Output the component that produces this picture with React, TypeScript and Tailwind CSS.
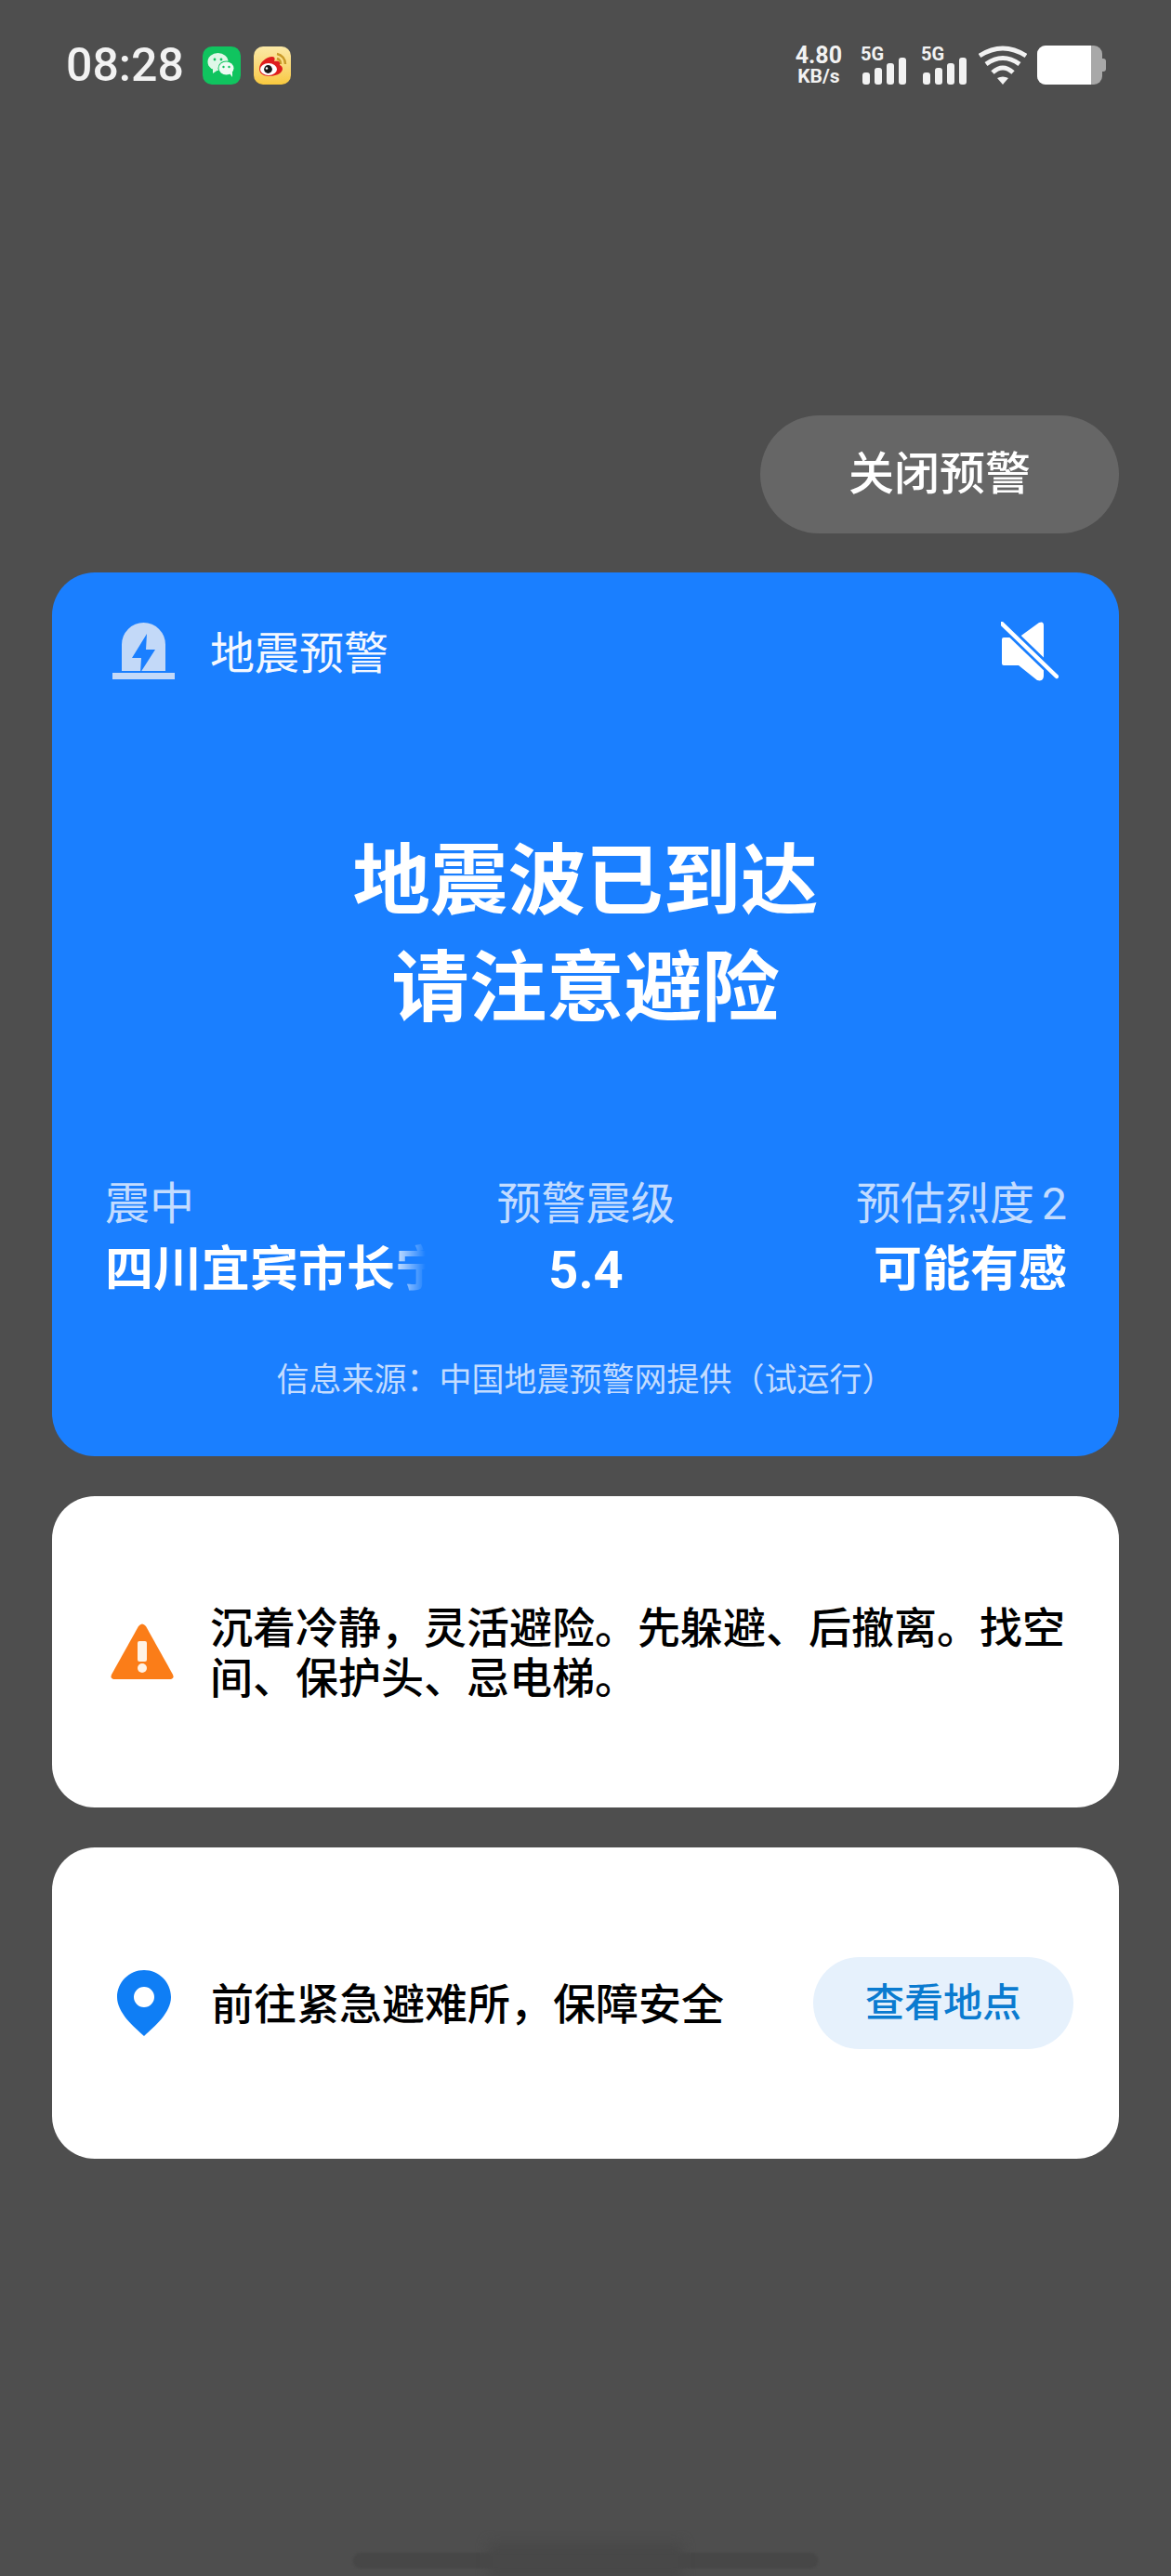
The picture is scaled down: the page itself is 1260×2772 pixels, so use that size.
import React from "react";

const cjk = `Roboto, "Noto Sans CJK SC", sans-serif`;

function WeChat() {
  return (
    <div className="w-[41px] h-[41px] rounded-[10px] bg-[#10c45f] flex items-center justify-center">
      <svg width="41" height="41" viewBox="0 0 41 41">
        <ellipse cx="16.5" cy="16.5" ry="9.5" rx="11" fill="#dff7e8" />
        <path d="M11 23 L11 29 L17 25 Z" fill="#dff7e8" />
        <ellipse cx="25.5" cy="23.5" rx="9" ry="8" fill="#10c45f" />
        <ellipse cx="25.5" cy="23.5" rx="8" ry="7" fill="#eefbf3" />
        <path d="M29 29 L32 33 L32 27 Z" fill="#eefbf3" />
        <circle cx="13" cy="14" r="1.4" fill="#10c45f" />
        <circle cx="20" cy="14" r="1.4" fill="#10c45f" />
        <circle cx="22.5" cy="22" r="1.2" fill="#10c45f" />
        <circle cx="28.5" cy="22" r="1.2" fill="#10c45f" />
      </svg>
    </div>
  );
}

function Weibo() {
  return (
    <div className="w-[40px] h-[41px] rounded-[10px] bg-gradient-to-b from-[#fbe9a6] to-[#f9c93c] flex items-center justify-center">
      <svg width="40" height="41" viewBox="0 0 40 41">
        <path d="M25 8 A11 11 0 0 1 34 19" stroke="#c99a2a" strokeWidth="2.4" fill="none" />
        <path d="M25 13 A6 6 0 0 1 29 19" stroke="#c99a2a" strokeWidth="2.4" fill="none" />
        <path d="M6 24 C6 17 14 11 20 11 C23 11 23 14 22 16 C26 15 29 16 28 20 C32 22 32 26 28 29 C22 33 6 34 6 24 Z" fill="#df1d1d" />
        <ellipse cx="16" cy="24.5" rx="9" ry="6.5" fill="#ffffff" />
        <circle cx="15.5" cy="24.5" r="4.4" fill="#1a1a1a" />
        <circle cx="14" cy="23.5" r="1.2" fill="#ffffff" />
      </svg>
    </div>
  );
}

function Signal() {
  return (
    <div className="relative w-[49px] h-[42px]">
      <span className="absolute left-0 -top-[1px] text-[#f2f2f2] text-[20px] leading-[20px] font-bold">5G</span>
      <svg width="49" height="42" viewBox="0 0 49 42" className="absolute left-0 top-0">
        <rect x="2" y="29" width="8" height="13" rx="3" fill="#f2f2f2" />
        <rect x="15" y="24" width="8" height="18" rx="3" fill="#f2f2f2" />
        <rect x="28" y="19" width="8" height="23" rx="3" fill="#f2f2f2" />
        <rect x="41" y="13" width="8" height="29" rx="3" fill="#f2f2f2" />
      </svg>
    </div>
  );
}

function Wifi() {
  return (
    <svg width="52" height="42" viewBox="0 0 52 42">
      <path d="M1 11 Q26 -5 51 11" stroke="#f2f2f2" strokeWidth="5" fill="none" />
      <path d="M8 20 Q26 7 44 20" stroke="#f2f2f2" strokeWidth="5" fill="none" />
      <path d="M15 29 Q26 19 37 29" stroke="#f2f2f2" strokeWidth="5" fill="none" />
      <path d="M20 35 Q26 32 32 35 L26 42 Z" fill="#f2f2f2" />
    </svg>
  );
}

function Battery() {
  return (
    <svg width="74" height="42" viewBox="0 0 74 42">
      <rect x="0" y="0" width="70" height="42" rx="9" fill="#a8a8a8" />
      <path d="M9 0 H58 V42 H9 A9 9 0 0 1 0 33 V9 A9 9 0 0 1 9 0 Z" fill="#ffffff" />
      <path d="M70 14 H71 A3 3 0 0 1 74 17 V25 A3 3 0 0 1 71 28 H70 Z" fill="#a8a8a8" />
    </svg>
  );
}

function Alarm() {
  return (
    <svg width="67" height="61" viewBox="0 0 67 61">
      <path d="M10 52 V23.5 A23.5 23.5 0 0 1 57 23.5 V52 Z" fill="#c3d9f8" />
      <rect x="0" y="54" width="67" height="7" fill="#c3d9f8" />
      <path d="M37 12 L21 38 H31 L30 54 L46 29 H36 Z" fill="#1a7fff" />
    </svg>
  );
}

function Muted() {
  return (
    <svg width="62" height="64" viewBox="0 0 62 64">
      <path d="M1 19 Q1 17 3 17 H19 L41 1 Q46 -1 46 4 V58 Q46 65 39 63 L19 47 H3 Q1 47 1 45 Z" fill="#ffffff" />
      <path d="M1 2 L60 59" stroke="#1a7fff" strokeWidth="10" />
      <path d="M1 2 L60 59" stroke="#ffffff" strokeWidth="4.5" strokeLinecap="round" />
    </svg>
  );
}

function Warn() {
  return (
    <svg width="68" height="62" viewBox="0 0 68 62">
      <path d="M30 3 Q34 -2 38 3 L67 55 Q69 60 63 60 H5 Q-1 60 1 55 Z" fill="#fb7d18" />
      <rect x="29" y="19" width="10" height="22" rx="2" fill="#fff3e6" />
      <circle cx="34" cy="48" r="5" fill="#fff3e6" />
    </svg>
  );
}

function Pin() {
  return (
    <svg width="58" height="71" viewBox="0 0 58 71">
      <path fillRule="evenodd" d="M29 0 C45 0 58 13 58 29 C58 46 40 61 29 71 C18 61 0 46 0 29 C0 13 13 0 29 0 Z M29 18 A11 11 0 1 0 29 40 A11 11 0 1 0 29 18 Z" fill="#0f7ef5" />
    </svg>
  );
}

export default function App() {
  return (
    <div className="w-[1260px] h-[2772px] bg-[#4e4e4e] flex flex-col overflow-hidden" style={{ fontFamily: cjk }}>
      <div className="h-[140px] flex items-center justify-between pl-[71px] pr-[70px] shrink-0">
        <div className="flex items-center">
          <span className="text-[#f2f2f2] text-[50px] font-medium leading-none">08:28</span>
          <div className="ml-[20px] flex gap-[14px]">
            <WeChat />
            <Weibo />
          </div>
        </div>
        <div className="flex items-center">
          <div className="flex flex-col items-center text-[#f2f2f2] font-bold mr-[20px]">
            <span className="text-[25px] leading-[24px]">4.80</span>
            <span className="text-[21px] leading-[20px]">KB/s</span>
          </div>
          <div className="mr-[16px]"><Signal /></div>
          <div className="mr-[13px]"><Signal /></div>
          <div className="mr-[11px]"><Wifi /></div>
          <Battery />
        </div>
      </div>

      <div className="flex justify-end pr-[56px] mt-[307px] shrink-0">
        <div className="w-[386px] h-[127px] rounded-full bg-[#666666] flex items-center justify-center text-white text-[49px] font-medium">
          关闭预警
        </div>
      </div>

      <div className="mx-[56px] mt-[42px] h-[951px] rounded-[46px] bg-[#1a7fff] flex flex-col shrink-0 text-white">
        <div className="flex items-center justify-between pl-[65px] pr-[65px] pt-[50px]">
          <div className="flex items-center">
            <Alarm />
            <span className="ml-[38px] text-[48px] leading-[62px] mt-[7px] text-[#f4f8ff]">地震预警</span>
          </div>
          <Muted />
        </div>
        <div className="mt-[156px] text-center text-[83.5px] leading-[115px] font-bold">
          <div>地震波已到达</div>
          <div>请注意避险</div>
        </div>
        <div className="mt-[145px] grid grid-cols-3 pl-[57px] pr-[56px]">
          <div>
            <div className="text-[48px] leading-[60px] text-[#c3dcff]">震中</div>
            <div className="w-[345px] overflow-hidden whitespace-nowrap text-[52px] leading-[76px] mt-[3px] font-bold [mask-image:linear-gradient(to_right,black_88%,transparent_100%)]">
              四川宜宾市长宁县
            </div>
          </div>
          <div className="text-center">
            <div className="text-[48px] leading-[60px] text-[#c3dcff]">预警震级</div>
            <div className="text-[56px] leading-[76px] mt-[3px] font-bold">5.4</div>
          </div>
          <div className="text-right">
            <div className="text-[48px] leading-[60px] text-[#c3dcff]">预估烈度<span className="ml-[8px]">2</span></div>
            <div className="text-[52px] leading-[76px] mt-[3px] font-bold">可能有感</div>
          </div>
        </div>
        <div className="mt-[56px] text-center text-[35px] leading-[50px] text-[#c3dcff]">
          信息来源：中国地震预警网提供（试运行）
        </div>
      </div>

      <div className="mx-[56px] mt-[43px] h-[335px] rounded-[46px] bg-white flex items-center pl-[63px] pr-[56px] shrink-0">
        <div className="shrink-0"><Warn /></div>
        <div className="ml-[39px] mt-[3px] text-[46px] leading-[54px] font-medium text-black">
          沉着冷静，灵活避险。先躲避、后撤离。找空间、保护头、忌电梯。
        </div>
      </div>

      <div className="mx-[56px] mt-[43px] h-[335px] rounded-[46px] bg-white flex items-center pl-[70px] pr-[49px] shrink-0">
        <div className="shrink-0"><Pin /></div>
        <div className="ml-[43px] mt-[3px] text-[46px] leading-[55px] font-medium text-black whitespace-nowrap">
          前往紧急避难所，保障安全
        </div>
        <div className="ml-auto w-[280px] h-[99px] rounded-full bg-[#e6f1fc] flex items-center justify-center text-[42px] font-medium text-[#0a7bd0]">
          查看地点
        </div>
      </div>

      <div className="mt-auto mb-[8px] mx-auto w-[500px] h-[17px] rounded-full bg-[#474747] blur-[1px] flex justify-center items-center">
        <div className="w-[210px] h-[40px] bg-[#484848] blur-[6px]" />
      </div>
    </div>
  );
}
